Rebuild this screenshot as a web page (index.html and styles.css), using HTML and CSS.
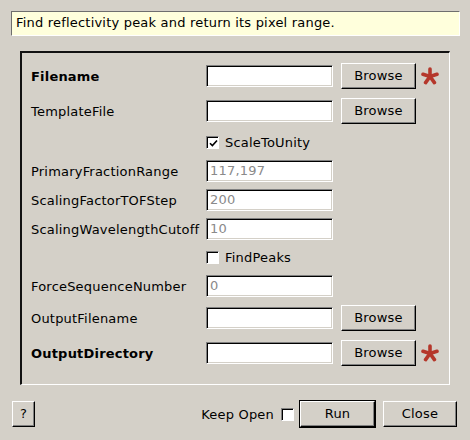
FILE: index.html
```html
<!DOCTYPE html>
<html>
<head>
<meta charset="utf-8">
<link rel="stylesheet" href="styles.css">
</head>
<body>
<div class="desc">Find reflectivity peak and return its pixel range.</div>
<div class="frame">
  <div class="grid">
    <div class="lbl bold">Filename</div>
    <div class="field"></div>
    <div class="btn browse">Browse</div>
    <svg class="star" viewBox="0 0 18 18"><g stroke="#b5372b" stroke-width="3.6" stroke-linecap="round"><line x1="9" y1="9.5" x2="9" y2="2"/><line x1="9" y1="9.5" x2="16" y2="7.3"/><line x1="9" y1="9.5" x2="13.4" y2="15.6"/><line x1="9" y1="9.5" x2="4.6" y2="15.6"/><line x1="9" y1="9.5" x2="2" y2="7.3"/></g></svg>

    <div class="lbl">TemplateFile</div>
    <div class="field"></div>
    <div class="btn browse">Browse</div>
    <div></div>

    <div></div>
    <div class="chkrow"><span class="check on"><svg viewBox="0 0 9 9"><path d="M1 4.2 L3.4 6.6 L8 1.5" fill="none" stroke="#000" stroke-width="1.6"/></svg></span>ScaleToUnity</div>

    <div class="lbl">PrimaryFractionRange</div>
    <div class="field ph">117,197</div>
    <div></div><div></div>

    <div class="lbl">ScalingFactorTOFStep</div>
    <div class="field ph">200</div>
    <div></div><div></div>

    <div class="lbl">ScalingWavelengthCutoff</div>
    <div class="field ph">10</div>
    <div></div><div></div>

    <div></div>
    <div class="chkrow"><span class="check"></span>FindPeaks</div>

    <div class="lbl">ForceSequenceNumber</div>
    <div class="field ph">0</div>
    <div></div><div></div>

    <div class="lbl">OutputFilename</div>
    <div class="field"></div>
    <div class="btn browse">Browse</div>
    <div></div>

    <div class="lbl bold">OutputDirectory</div>
    <div class="field"></div>
    <div class="btn browse">Browse</div>
    <svg class="star" viewBox="0 0 18 18"><g stroke="#b5372b" stroke-width="3.6" stroke-linecap="round"><line x1="9" y1="9.5" x2="9" y2="2"/><line x1="9" y1="9.5" x2="16" y2="7.3"/><line x1="9" y1="9.5" x2="13.4" y2="15.6"/><line x1="9" y1="9.5" x2="4.6" y2="15.6"/><line x1="9" y1="9.5" x2="2" y2="7.3"/></g></svg>
  </div>
</div>
<div class="footer">
  <div class="btn help">?</div>
  <div class="spacer"></div>
  <div class="keep">Keep Open</div>
  <span class="check keepchk"></span>
  <div class="default"><div class="btn run">Run</div></div>
  <div class="btn close">Close</div>
</div>
</body>
</html>
```
FILE: styles.css
```css
html, body {
  margin: 0;
  padding: 0;
  background: #d4d0c8;
  width: 470px;
  height: 440px;
  overflow: hidden;
  font-family: "DejaVu Sans", sans-serif;
  font-size: 13px;
  letter-spacing: 0.2px;
  color: #000;
}
.desc {
  margin: 11px 10px 0 11px;
  height: 25px;
  box-sizing: border-box;
  border-style: solid;
  border-width: 1px;
  border-color: #6e6e6e #fff #fff #6e6e6e;
  background: #ffffdc;
  padding-left: 4px;
  line-height: 22px;
  white-space: nowrap;
}
.frame {
  margin: 15px 0 0 20px;
  width: 430px;
  height: 334px;
  box-sizing: border-box;
  border-style: solid;
  border-width: 2px 1px 1px 2px;
  border-color: #111 #fff #fff #111;
  padding: 9px 0 0 9px;
}
.grid {
  display: grid;
  grid-template-columns: 175px 135px 81px 20px;
  grid-template-rows: 28px 28px 21px 22px 22px 22px 21px 22px 28px 28px;
  row-gap: 7px;
  align-items: center;
}
.lbl {
  white-space: nowrap;
}
.bold {
  font-weight: bold;
}
.field {
  width: 127px;
  height: 22px;
  box-sizing: border-box;
  border-style: solid;
  border-width: 1px;
  border-color: #808080 #fff #fff #808080;
  box-shadow: inset 1px 1px 0 #000, inset -1px -1px 0 #d4d0c8;
  background: #fff;
  color: #8a8a8a;
  padding-left: 3px;
  line-height: 19px;
}
.btn {
  box-sizing: border-box;
  height: 26px;
  border-style: solid;
  border-width: 1px;
  border-color: #fff #000 #000 #fff;
  box-shadow: inset -1px -1px 0 #808080;
  display: flex;
  align-items: center;
  justify-content: center;
  padding-bottom: 1px;
}
.browse {
  width: 75px;
}
.star {
  width: 18px;
  height: 18px;
  margin-left: -1px;
}
.chkrow {
  grid-column: 2 / 5;
  display: flex;
  align-items: center;
  white-space: nowrap;
}
.check {
  width: 13px;
  height: 13px;
  box-sizing: border-box;
  border-style: solid;
  border-width: 1px;
  border-color: #808080 #fff #fff #808080;
  box-shadow: inset 1px 1px 0 #000;
  background: #fff;
  margin-right: 6px;
  display: inline-flex;
  align-items: center;
  justify-content: center;
}
.check svg {
  width: 9px;
  height: 9px;
  margin: 1px 0 0 1px;
}
.footer {
  display: flex;
  align-items: center;
  margin-top: 15px;
  padding: 0 13px 0 12px;
  height: 28px;
}
.help {
  width: 23px;
}
.spacer {
  flex: 1;
}
.keep {
  white-space: nowrap;
}
.keepchk {
  margin: 0 0 0 7px;
}
.default {
  margin-left: 5px;
  border: 1px solid #000;
}
.run {
  width: 75px;
}
.close {
  width: 74px;
  margin-left: 7px;
}
```
